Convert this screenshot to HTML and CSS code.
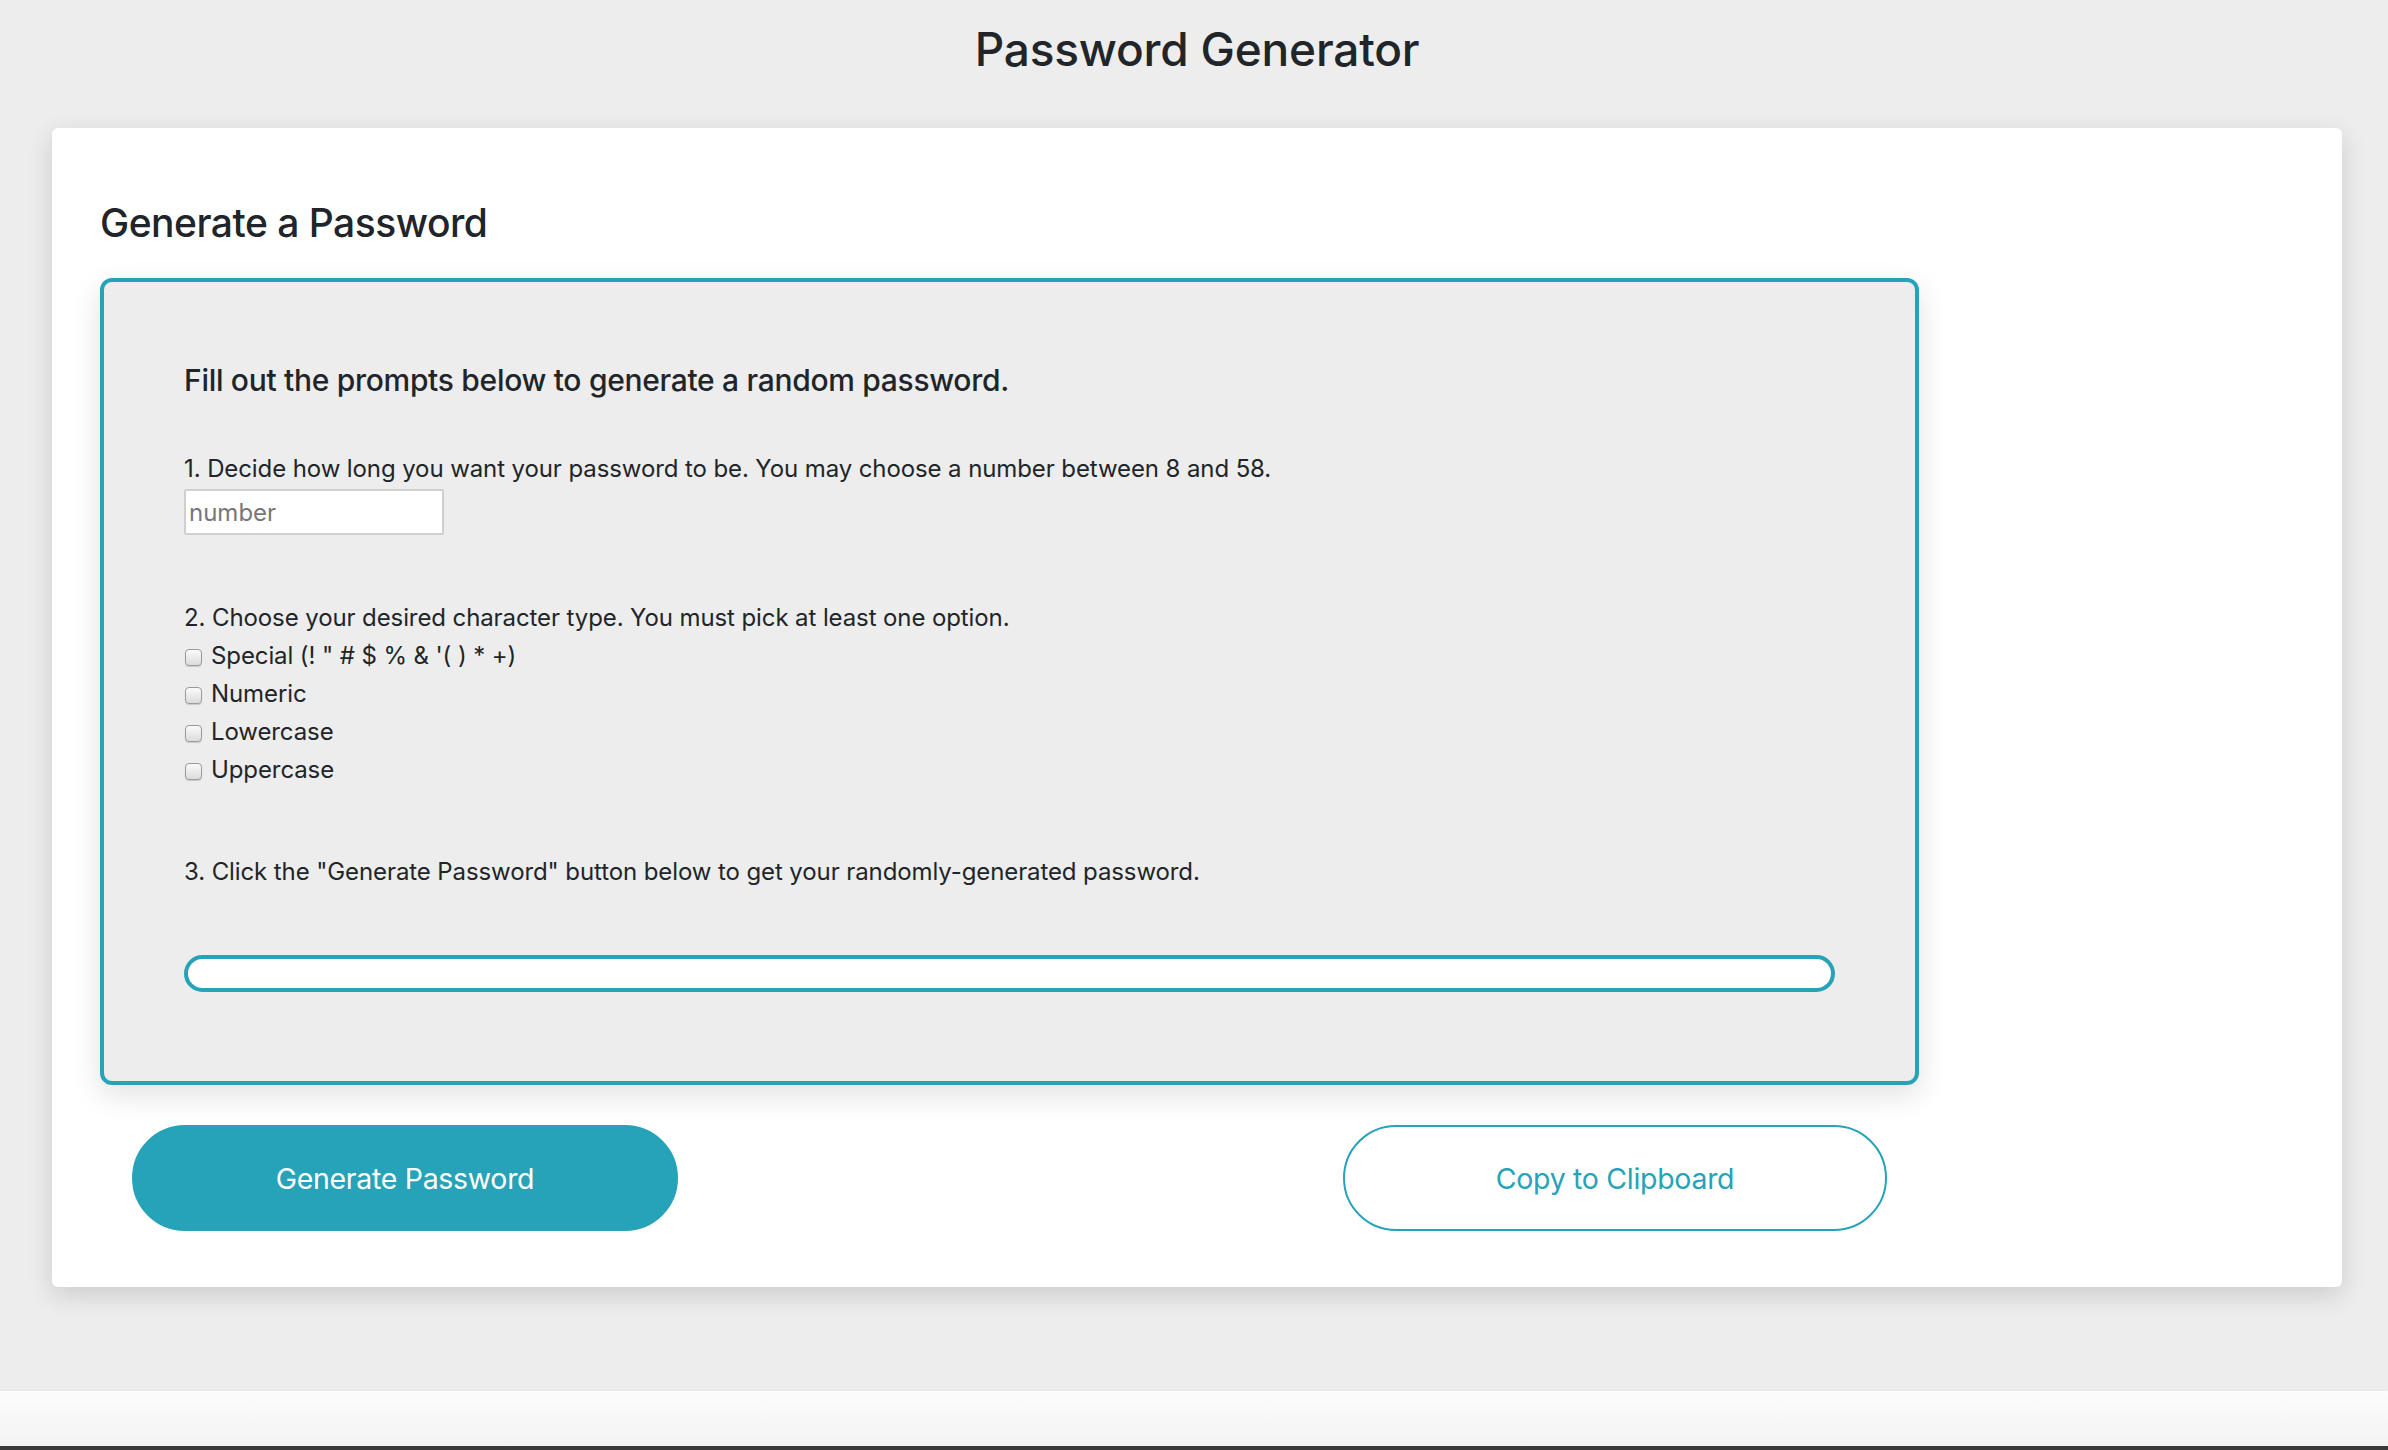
FILE: index.html
```html
<!DOCTYPE html>
<html lang="en">
<head>
<meta charset="utf-8">
<title>Password Generator</title>
<link rel="stylesheet" href="styles.css">
</head>
<body>
<div class="page">
  <header class="header">
    <h1 class="title">Password Generator</h1>
  </header>
  <main class="card">
    <h2 class="card-title">Generate a Password</h2>
    <section class="panel">
      <h3 class="panel-title">Fill out the prompts below to generate a random password.</h3>
      <div class="step step-first">
        <p class="text">1. Decide how long you want your password to be. You may choose a number between 8 and 58.</p>
        <input class="num" type="text" placeholder="number">
      </div>
      <div class="step">
        <p class="text">2. Choose your desired character type. You must pick at least one option.</p>
        <label class="opt"><input class="check" type="checkbox">Special (! " # $ % &amp; '( ) * +)</label>
        <label class="opt"><input class="check" type="checkbox">Numeric</label>
        <label class="opt"><input class="check" type="checkbox">Lowercase</label>
        <label class="opt"><input class="check" type="checkbox">Uppercase</label>
      </div>
      <p class="text step">3. Click the "Generate Password" button below to get your randomly-generated password.</p>
      <textarea class="output" readonly></textarea>
    </section>
    <div class="actions">
      <button class="btn btn-fill" type="button">Generate Password</button>
      <button class="btn btn-outline" type="button">Copy to Clipboard</button>
    </div>
  </main>
</div>
<footer class="bar"></footer>
</body>
</html>
```

FILE: styles.css
```css
* { box-sizing: border-box; }

html, body {
  margin: 0;
  padding: 0;
}

body {
  background: #ededed;
  font-family: Inter, "Noto Sans", "Liberation Sans", sans-serif;
  color: #212529;
  height: 1450px;
  overflow: hidden;
  display: flex;
  flex-direction: column;
}

.page {
  flex: 1;
  padding: 0 46px 0 52px;
}

.header {
  padding-top: 22px;
  text-align: center;
}

.title {
  margin: 0;
  font-size: 46px;
  line-height: 55px;
  font-weight: 500;
  letter-spacing: -0.2px;
}

.card {
  margin-top: 51px;
  background: #fff;
  border-radius: 6px;
  box-shadow: 0 8px 26px rgba(0, 0, 0, 0.14);
  padding: 71px 48px 56px;
}

.card-title {
  margin: 0;
  font-size: 39px;
  line-height: 48px;
  font-weight: 500;
  letter-spacing: -0.5px;
}

.panel {
  margin-top: 31px;
  width: 1819px;
  background: #ededed;
  border: 4px solid #26a3b8;
  border-radius: 12px;
  padding: 80px 80px 89px;
  box-shadow: 0 10px 30px rgba(0, 0, 0, 0.12);
}

.panel-title {
  margin: 0;
  font-size: 30px;
  line-height: 36px;
  font-weight: 500;
  letter-spacing: -0.3px;
}

.text {
  margin: 0;
  font-size: 24px;
  line-height: 38px;
  letter-spacing: -0.1px;
}

.step {
  margin-top: 64px;
}

.step-first {
  margin-top: 52px;
}

.step .text { margin: 0; }

.num {
  display: block;
  margin-top: 1px;
  width: 260px;
  height: 46px;
  border: 2px solid #cfcfcf;
  border-radius: 2px;
  background: #fff;
  padding: 0 3px;
  font-family: inherit;
  font-size: 24px;
  color: #212529;
}

.num::placeholder { color: #777; }

.opt {
  display: flex;
  align-items: center;
  font-size: 24px;
  line-height: 38px;
  letter-spacing: -0.1px;
}

.check {
  appearance: none;
  -webkit-appearance: none;
  width: 17px;
  height: 17px;
  margin: 2px 9px 0 1px;
  border: 1px solid #9a9a9a;
  border-radius: 4px;
  background: linear-gradient(#fafafa, #dcdcdc);
  box-shadow: 0 1px 1px rgba(0, 0, 0, 0.15);
  flex: none;
}

.output {
  display: block;
  margin-top: 64px;
  width: 100%;
  height: 37px;
  border: 4px solid #26a3b8;
  border-radius: 19px;
  background: #fff;
  resize: none;
  outline: none;
}

.actions {
  width: 1819px;
  margin-top: 40px;
  padding: 0 32px;
  display: flex;
  justify-content: space-between;
}

.btn {
  width: 546px;
  height: 106px;
  border-radius: 53px;
  font-family: inherit;
  font-size: 28.5px;
  font-weight: 400;
  letter-spacing: -0.3px;
  cursor: pointer;
}

.btn-fill {
  background: #26a3b8;
  border: 2px solid #26a3b8;
  color: #fff;
}

.btn-outline {
  width: 544px;
  background: #fff;
  border: 2px solid #26a3b8;
  color: #26a3b8;
}

.bar {
  height: 59px;
  background: linear-gradient(#fcfcfc, #f3f3f3);
  border-bottom: 4px solid #3a3a3a;
  box-shadow: 0 -1px 2px rgba(0, 0, 0, 0.04);
}
```
